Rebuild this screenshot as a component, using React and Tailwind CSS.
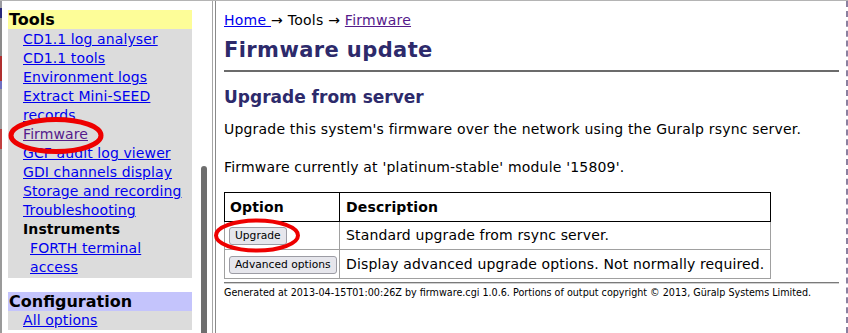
import React from 'react';

const font = { fontFamily: '"DejaVu Sans", Verdana, sans-serif' };

const toolLinks = [
  { name: 'CD1.1 log analyser' },
  { name: 'CD1.1 tools' },
  { name: 'Environment logs' },
  { name: 'Extract Mini-SEED records' },
  { name: 'Firmware', visited: true },
  { name: 'GCF audit log viewer' },
  { name: 'GDI channels display' },
  { name: 'Storage and recording' },
  { name: 'Troubleshooting' },
];

const Sidebar = () => (
  <div className="w-[184px] shrink-0 pt-[9px]">
    <div className="h-[19px] bg-[#fdfd98] pl-[1px] text-[16px] font-bold leading-[19px] text-black">Tools</div>
    <div className="bg-[#dcdcdc] pt-[1px] pb-[1px] text-[14px] leading-[19px] tracking-[0.1px]">
      {toolLinks.map((item) => (
        <div key={item.name} className="pl-[15px] pr-[2px]">
          <a href="#" className={`underline ${item.visited ? 'text-[#551a8b]' : 'text-[#0000ee]'}`}>
            {item.name}
          </a>
        </div>
      ))}
      <div className="pl-[15px] font-bold text-black">Instruments</div>
      <div className="pl-[22px] pr-[30px]">
        <a href="#" className="text-[#0000ee] underline">FORTH terminal access</a>
      </div>
    </div>
    <div className="mt-[14px] h-[19px] bg-[#c4c4fc] pl-[1px] text-[16px] font-bold leading-[19px] text-black">
      Configuration
    </div>
    <div className="bg-[#dcdcdc] pl-[15px] text-[14px] leading-[19px] tracking-[0.1px]">
      <a href="#" className="text-[#0000ee] underline">All options</a>
    </div>
  </div>
);

const options = [
  { label: 'Upgrade', text: 'Standard upgrade from rsync server.', h: 'h-[28px]' },
  { label: 'Advanced options', text: 'Display advanced upgrade options. Not normally required.', h: 'h-[29px]' },
];

const Content = () => (
  <div className="min-w-0 flex-1 pl-[8px] pr-[7px] text-black">
    <div className="pt-[11px] text-[14px] leading-[17px] tracking-[0.25px]">
      <a href="#" className="text-[#0000ee] underline">Home </a>
      {' '}→ Tools →{' '}
      <a href="#" className="text-[#551a8b] underline">Firmware</a>
    </div>
    <h1 className="mt-[9px] text-[21px] font-bold leading-[25px] tracking-[0.4px] text-[#2d2a6b]">Firmware update</h1>
    <div className="mt-[7px] h-[2px] bg-[#6b6b6b]" />
    <h2 className="mt-[15px] text-[17px] font-bold leading-[21px] text-[#2d2a6b]">Upgrade from server</h2>
    <p className="mt-[13px] text-[14px] leading-[17px] tracking-[0.19px]">
      Upgrade this system's firmware over the network using the Guralp rsync server.
    </p>
    <p className="mt-[21px] text-[14px] leading-[17px] tracking-[0.19px]">
      Firmware currently at 'platinum-stable' module '15809'.
    </p>
    <table className="mt-[16px] w-[547px] table-fixed border-collapse whitespace-nowrap text-[14px] leading-[17px] tracking-[0.15px]">
      <colgroup>
        <col className="w-[115px]" />
        <col />
      </colgroup>
      <thead>
        <tr className="h-[29px]">
          <th className="border border-black px-[5px] text-left font-bold">Option</th>
          <th className="border border-black px-[6px] text-left font-bold">Description</th>
        </tr>
      </thead>
      <tbody>
        {options.map((o) => (
          <tr key={o.label} className={o.h}>
            <td className="border border-[#a0a0a0] px-[4px]">
              <button className="h-[18px] whitespace-nowrap rounded-[3px] border border-[#9c9ca4] bg-[#e6e6ec] px-[5px] text-[10.7px] leading-[16px] tracking-normal text-black">
                {o.label}
              </button>
            </td>
            <td className="border border-[#a0a0a0] px-[6px]">{o.text}</td>
          </tr>
        ))}
      </tbody>
    </table>
    <div className="mt-[3px] h-[2px] border-t border-b border-t-[#7a7a7a] border-b-[#d0d0d0]" />
    <div className="mt-[3px] text-[9.6px] leading-[12px]">
      Generated at 2013-04-15T01:00:26Z by firmware.cgi 1.0.6. Portions of output copyright © 2013, Güralp Systems Limited.
    </div>
  </div>
);

export default function App() {
  return (
    <div className="relative flex h-[333px] w-[848px] overflow-hidden border-t border-[#b4b4b4] bg-white" style={font}>
      {/* edge of the window behind */}
      <div className="flex w-[8px] shrink-0 flex-col">
        <div className="h-[7px] w-[2px] bg-[#9a9aa0]" />
        <div className="h-[10px] w-[2px] bg-[#28287a]" />
        <div className="h-[38px] w-[2px] bg-[#8c8c8c]" />
        <div className="h-[25px] w-[2px] bg-[#b03030]" />
        <div className="h-[8px] w-[2px] bg-[#7070c0]" />
        <div className="h-[40px] w-[2px] bg-[#a0a0a0]" />
        <div className="h-[20px] w-[2px] bg-[#c04040]" />
        <div className="w-[2px] flex-1 bg-[#9a9a9a]" />
      </div>
      <Sidebar />
      <div className="w-[9px] shrink-0" />
      <div className="flex w-[6px] shrink-0 flex-col">
        <div className="h-[165px]" />
        <div className="flex-1 rounded-t-full bg-[#6e6e6e]" />
      </div>
      <div className="w-[5px] shrink-0" />
      <div className="w-px shrink-0 bg-[#a6a6a6]" />
      <div className="w-[2px] shrink-0" />
      <div className="w-px shrink-0 bg-[#8a8a8a]" />
      <Content />
      <div className="w-[2px] shrink-0 border-l-2 border-dashed border-[#8a80a0]" />

      <svg className="pointer-events-none absolute left-0 top-0" width="848" height="333" viewBox="0 0 848 333">
        <ellipse cx="56" cy="134.5" rx="45" ry="16" fill="none" stroke="#ee0000" strokeWidth="5" />
        <ellipse cx="257" cy="234.5" rx="41" ry="15" fill="none" stroke="#ee0000" strokeWidth="4" />
      </svg>
    </div>
  );
}
